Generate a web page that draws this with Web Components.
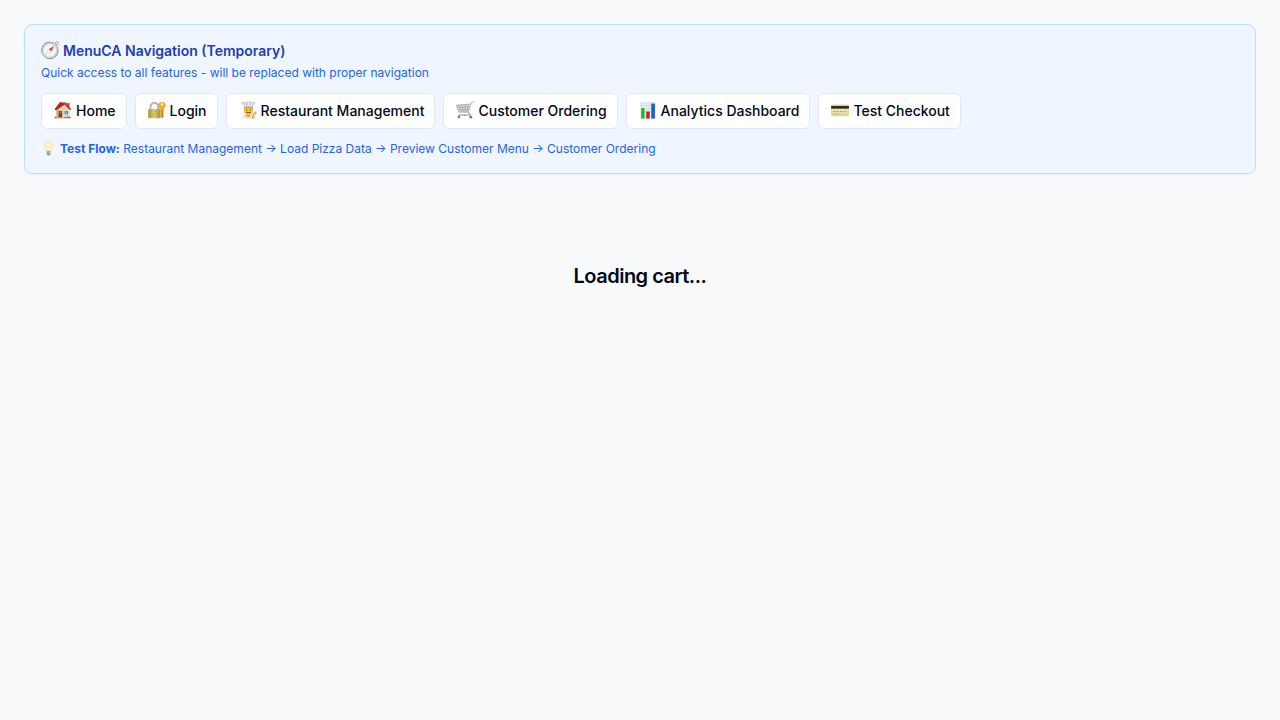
<!DOCTYPE html>
<html lang="en">
<head>
<meta charset="utf-8">
<meta name="viewport" content="width=device-width, initial-scale=1">
<title>MenuCA</title>
<style>
  body { margin: 0; min-height: 100vh; background: #f8fafc; color: #020817; font-family: Inter, "Liberation Sans", sans-serif; }
</style>
</head>
<body>
<checkout-page>
  <feature-nav>
    <menu-icon slot="icon" name="compass"></menu-icon>
    <span slot="title">MenuCA Navigation (Temporary)</span>
    <span slot="subtitle">Quick access to all features - will be replaced with proper navigation</span>
    <nav-link href="#home" icon="house">Home</nav-link>
    <nav-link href="#login" icon="lock">Login</nav-link>
    <nav-link href="#restaurant" icon="chef">Restaurant Management</nav-link>
    <nav-link href="#order" icon="cart">Customer Ordering</nav-link>
    <nav-link href="#analytics" icon="chart">Analytics Dashboard</nav-link>
    <nav-link href="#checkout" icon="card">Test Checkout</nav-link>
    <flow-hint slot="hint" label="Test Flow:">Restaurant Management → Load Pizza Data → Preview Customer Menu → Customer Ordering</flow-hint>
  </feature-nav>
  <loading-message>Loading cart...</loading-message>
</checkout-page>

<script>
const ICONS = {
  compass: `<defs><linearGradient id="g" x2="1" y2="1"><stop stop-color="#777"/><stop offset=".5" stop-color="#b8b8b8"/><stop offset="1" stop-color="#666"/></linearGradient></defs>
    <circle cx="16" cy="2.2" r="1.5" fill="none" stroke="#9aa0a5" stroke-width=".8"/>
    <circle cx="8.8" cy="9.4" r="8.3" fill="#d5d5d5" stroke="url(#g)" stroke-width="1"/>
    <circle cx="8.8" cy="9.4" r="6.5" fill="#f5f5f4" stroke="#ccc" stroke-width=".5"/>
    <path d="M13.3 4.8 10 10.5 7.8 8.3Z" fill="#f02d2d"/><path d="M4.3 14 7.8 8.3 10 10.5Z" fill="#fff" stroke="#bbb" stroke-width=".4"/>`,
  house: `<path d="M13.3 2h2.2v5h-2.2z" fill="#a5523f"/>
    <path d="M2.4 8.6 8.7 3l6.9 5.6v8.1H2.4z" fill="#ecd0a0"/>
    <path d="M2.4 8.6 5 6.4v10.3H2.4z" fill="#d8b582"/>
    <path d="m6 1.3 6.2.2 5.3 7-1.4.7-5.9-5.4L2 9.2.6 8.2z" fill="#c2423c"/>
    <path d="m6 1.3 4 1.4-.1 1.2L2 9.2.6 8.2z" fill="#a92e2b"/>
    <path d="M4.6 10h3.5v6.8H4.6z" fill="#754729"/><path d="M5.4 10.7h1.8v2.2H5.4z" fill="#a87450"/>
    <path d="M10 9.3h4.8v4.7H10z" fill="#fff8e9"/><path d="M10.5 9.8h1.7v3.7h-1.7zM12.6 9.8h1.7v3.7h-1.7z" fill="#4592bc"/>
    <path d="M2.3 16.5h13.5v.9H2.3z" fill="#b8aca0"/><path d="M.3 17.2q.1-2.3 1.6-1.4l1.4 1.4zM9.8 16.8q.7-1.3 1.7-.5 1-1 2 0 2.2-2.2 3.8.9z" fill="#718e42"/>`,
  lock: `<defs><linearGradient id="g"><stop stop-color="#a89837"/><stop offset=".5" stop-color="#dfcf73"/><stop offset="1" stop-color="#a79331"/></linearGradient></defs>
    <path d="M2.5 9V5.8a3.9 3.9 0 0 1 7.8 0V9" fill="none" stroke="#9daab0" stroke-width="1.8"/><path d="M3 8.7V6a3.4 3.4 0 0 1 5-3" fill="none" stroke="#d5dde0" stroke-width=".7"/>
    <path d="M12.4 7h3.2v9.1l-1.5 1.2-1.7-1.1z" fill="#eba21c"/><path d="M14.6 7v9.5" stroke="#bd760b" stroke-width=".7"/>
    <rect x=".2" y="8" width="12.2" height="9.2" rx=".9" fill="url(#g)"/><path d="M.8 10.5h11M.8 12.7h11M.8 14.9h11" stroke="#9a8937" stroke-width=".4" opacity=".5"/>
    <path d="M14 1.1c2.6 0 4 1.4 3.8 3.5-.2 2.5-1.7 3.8-3.8 3.8s-3.7-1.4-3.8-3.8c-.1-2.1 1.3-3.5 3.8-3.5z" fill="#f5af26"/><circle cx="14" cy="3.5" r="1.2" fill="#fff"/>`,
  chef: `<path d="M2.8 17.8q.2-3.9 4.1-4.3h5.4q4 .5 4.2 4.3z" fill="#e8e9e8"/>
    <path d="M7.4 12.2h4v2.2l-2 1.5-2-1.5z" fill="#db982b"/><path d="m5.6 14.2 3.8 2.2 3.5-2.1" fill="none" stroke="#b9bcbb" stroke-width=".8"/>
    <ellipse cx="9.5" cy="9.5" rx="4.7" ry="5" fill="#fbc23c"/>
    <path d="M4.9 8.3V5.6h9.2v2.7l-1.1-1.7H6z" fill="#85603d"/>
    <path d="M5 5.7 4.7 3.9Q2 3.5 2.4 1.8 3.6.2 6.2.9 9.5-.6 12.8.9q3-.8 3.6 1Q16.6 3.7 14.2 4.1L14 6.4q-4.2-.8-9 0z" fill="#d2d4d3"/><path d="M6.3 1.8v3M9.5 1v3.6M12.7 1.7v3" stroke="#eeefee" stroke-width=".9"/>
    <circle cx="7.7" cy="8.9" r=".6" fill="#593b20"/><circle cx="11.4" cy="8.9" r=".6" fill="#593b20"/><path d="M6.9 11.5q1.3-1.1 2.6-.3 1.3-.8 2.6.3-2.4 1.2-5.2 0z" fill="#745031"/>
    <path d="m13.2 17.6 2-5.6" stroke="#cc8f67" stroke-width="1"/><ellipse cx="16.3" cy="12.2" rx="1.2" ry="1.9" fill="#dea57e" transform="rotate(18 16.3 12.2)"/><circle cx="14.3" cy="16.1" r="1.3" fill="#efb33d"/>`,
  cart: `<path d="M.3 4.2 14.2 3 12.4 11H3z" fill="#e0e0e0"/>
    <path d="M18 .8 15.5 1.4 12.4 11.2H3L.3 4.2 14.5 3.1M1.1 6.4l12.5-.5M2 8.7h11M3.2 3.9l2 7.2M6.2 3.7l1.1 7.3M9.2 3.5v7.5M12 3.3l-1 7.7" fill="none" stroke="#999" stroke-width=".7"/>
    <path d="M12.4 11.2 14.6 14H3.2l-1 1.2" fill="none" stroke="#8a8a8a" stroke-width="1"/>
    <circle cx="2.9" cy="16" r="1.2" fill="#777"/><circle cx="14.8" cy="16.2" r="1.4" fill="#666"/><circle cx="8.8" cy="14.6" r=".7" fill="#999"/><circle cx="14.8" cy="16.2" r=".5" fill="#ccc"/>`,
  chart: `<path d="M1.2.8h15.5v17H1.2z" fill="#e1ebef"/><path d="M1.2 4.5h15.5M1.2 8h15.5M1.2 11.5h15.5M1.2 15h15.5" stroke="#c8d6df" stroke-width=".5"/>
    <path d="M2 7h3.5v10.5H2z" fill="#17ba20"/><path d="M7.2 10.5h3.5v7H7.2z" fill="#c4232b"/><path d="M12.4 2.6h3.5v14.9h-3.5z" fill="#1961bd"/><path d="M2 7h.8v10.5H2z" fill="#46dc4a"/><path d="M7.2 10.5H8v7h-.8z" fill="#e14b50"/><path d="M12.4 2.6h.8v14.9h-.8z" fill="#397fd1"/>`,
  card: `<rect x=".1" y="3.5" width="17.8" height="11.7" rx="1" fill="#dfd58f"/><path d="M.1 5h17.8v2.6H.1z" fill="#292920"/><path d="M1.4 8.6h15.2v3H1.4z" fill="#eee9be"/><path d="M2 10.5h2.8M5.6 10.5h2.6M9 10.5h3M12.8 10.5h2.6" stroke="#8fa9ae" stroke-width=".9"/><path d="M2 13h5" stroke="#c4ba79" stroke-width=".6"/>`,
  bulb: `<defs><radialGradient id="g"><stop stop-color="#fffef4"/><stop offset=".6" stop-color="#fff6c8"/><stop offset="1" stop-color="#f3e4b2"/></radialGradient></defs>
    <path d="M6.5 12.3Q6.2 10.5 4.8 9 3.4 7.4 3.5 5.4 3.8 1.2 9 .8q5.2.4 5.5 4.6.1 2-1.3 3.6-1.4 1.5-1.7 3.3z" fill="url(#g)" stroke="#e8dfc4" stroke-width=".6"/>
    <path d="m7.2 6 1.1 6M10.8 6l-1.1 6M7.2 6l1.8 1 1.8-1" fill="none" stroke="#f1d07c" stroke-width=".5"/>
    <path d="M6.7 12.3h4.6v3.4q-.6 1.8-2.3 1.8t-2.3-1.8z" fill="#8d9293"/><path d="M6.7 13.5h4.6M6.9 15h4.2" stroke="#d0d3d3" stroke-width=".6"/>`
};

const define = (name, html, setup) => {
  const template = document.createElement("template");
  template.innerHTML = html;
  customElements.define(name, class extends HTMLElement {
    connectedCallback() {
      if (this.shadowRoot) return;
      this.attachShadow({ mode: "open" }).append(template.content.cloneNode(true));
      setup?.(this, this.shadowRoot);
    }
  });
};

define("menu-icon", `
  <style>
    :host { display: block; flex: none; width: 18px; height: 18px; }
    svg { display: block; width: 100%; height: 100%; overflow: visible; }
  </style>
  <svg viewBox="0 0 18 18" aria-hidden="true"></svg>`,
  (host, root) => { root.querySelector("svg").innerHTML = ICONS[host.getAttribute("name")]; });

define("nav-link", `
  <style>
    :host { display: block; }
    a { display: flex; gap: 4px; padding: 7px 10px 7px 12px; border: 1px solid #e2e8f0; border-radius: 6px; background: #fff; color: #020817; font-size: 14px; line-height: 20px; font-weight: 500; text-decoration: none; white-space: nowrap; }
    a:hover { background: #f1f5f9; }
  </style>
  <a><span><slot></slot></span></a>`,
  (host, root) => {
    const link = root.querySelector("a");
    link.setAttribute("href", host.getAttribute("href"));
    const icon = document.createElement("menu-icon");
    icon.setAttribute("name", host.getAttribute("icon"));
    link.prepend(icon);
  });

define("flow-hint", `
  <style>
    :host { display: flex; gap: 4px; color: #2563eb; font-size: 12px; line-height: 16px; }
    menu-icon { width: 15px; height: 15px; }
    strong { font-weight: 700; }
  </style>
  <menu-icon name="bulb"></menu-icon><span><strong></strong> <slot></slot></span>`,
  (host, root) => { root.querySelector("strong").textContent = host.getAttribute("label"); });

define("feature-nav", `
  <style>
    :host { display: block; padding: 16px; border: 1px solid #bfdbfe; border-radius: 8px; background: #eff6ff; box-shadow: 0 1px 2px rgb(0 0 0 / 0.05); }
    header { margin-bottom: 12px; }
    h3 { display: flex; gap: 4px; margin: 0 0 4px; color: #1e40af; font-size: 14px; line-height: 20px; font-weight: 600; }
    p { margin: 0; color: #2563eb; font-size: 12px; line-height: 16px; }
    nav { display: flex; flex-wrap: wrap; gap: 8px; margin-bottom: 12px; }
  </style>
  <header>
    <h3><slot name="icon"></slot><slot name="title"></slot></h3>
    <p><slot name="subtitle"></slot></p>
  </header>
  <nav aria-label="Features"><slot></slot></nav>
  <slot name="hint"></slot>`);

define("loading-message", `
  <style>
    :host { display: block; padding: 64px 0; text-align: center; }
    h2 { margin: 0; font-size: 20px; line-height: 28px; font-weight: 600; letter-spacing: -0.025em; }
  </style>
  <h2><slot></slot></h2>`);

define("checkout-page", `
  <style>
    :host { display: flex; flex-direction: column; gap: 24px; padding: 24px; }
  </style>
  <slot></slot>`);
</script>
</body>
</html>
